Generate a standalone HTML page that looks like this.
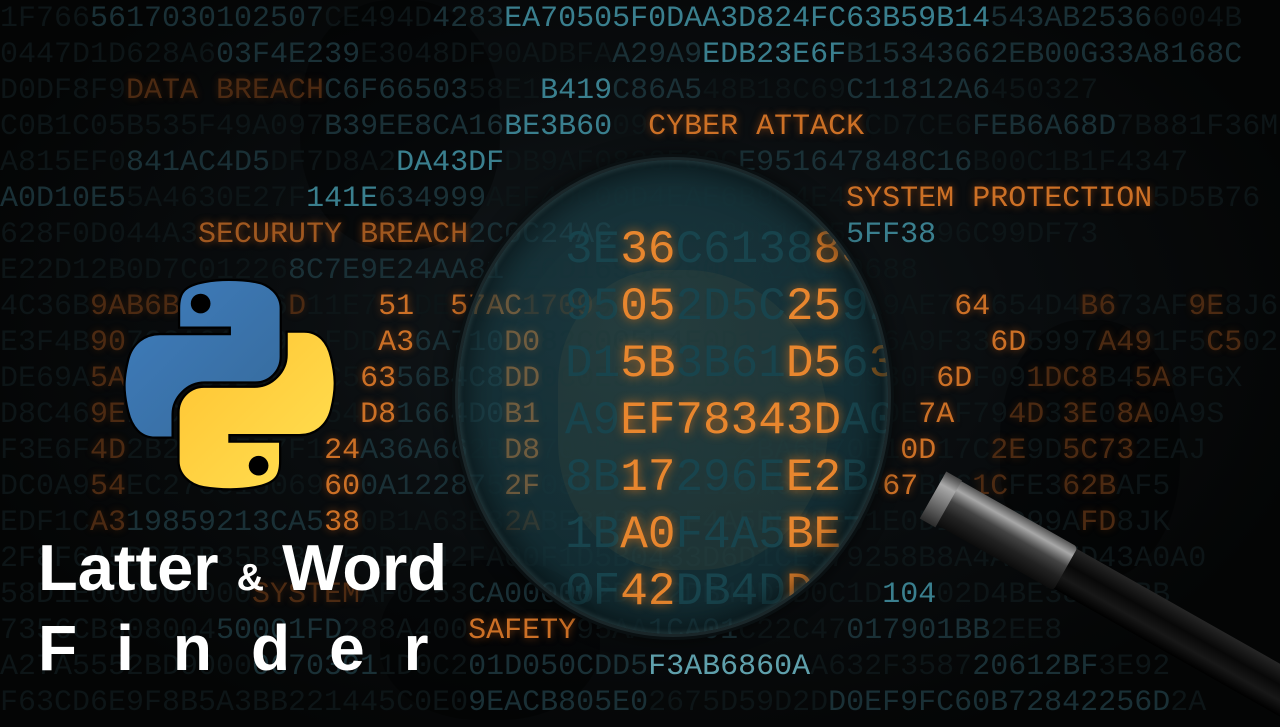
<!DOCTYPE html>
<html><head><meta charset="utf-8"><style>
*{margin:0;padding:0;box-sizing:border-box}
body{width:1280px;height:720px;overflow:hidden;background:#050607;position:relative;font-family:"Liberation Mono",monospace}
.bg{position:absolute;inset:0;background:radial-gradient(ellipse 700px 450px at 640px 330px,#13191c 0%,#090c0e 55%,#040505 100%)}
.map{position:absolute;background:#000;opacity:.35;border-radius:45%}
.r{position:absolute;left:0;font-size:30px;line-height:36px;white-space:pre;color:#0d1517;letter-spacing:0}
.m{color:#1a3036}.b{color:#3a7f8e}.o{color:#cc7026;text-shadow:0 0 8px rgba(220,100,20,.55)}.od{color:#4c2a12;text-shadow:0 0 8px rgba(200,90,20,.25)}
.lens{position:absolute;left:458px;top:160px;width:430px;height:474px;border-radius:50%;overflow:hidden;background:radial-gradient(ellipse at 45% 40%,rgba(35,85,95,.5),rgba(25,68,78,.55) 70%,rgba(18,50,58,.75) 100%);box-shadow:0 0 0 3px #1a2629,0 0 0 6px #0a1012,0 0 18px 6px rgba(0,0,0,.6)}
.lr{position:absolute;left:107px;font-size:46px;line-height:57px;white-space:pre;color:#18444d}
.lo{color:#e8862e;text-shadow:0 0 10px rgba(240,120,20,.8)}
.ld{color:#8a5e26}
.title{position:absolute;color:#fff;font-family:"Liberation Sans",sans-serif;font-weight:bold;white-space:pre}
</style></head><body>
<div class="bg"></div>
<div class="map" style="left:300px;top:0;width:200px;height:250px"></div>
<div class="map" style="left:1000px;top:320px;width:180px;height:260px"></div>
<div class="map" style="left:380px;top:560px;width:220px;height:160px"></div>

<div class="r" style="top:1px">1F766<span class="m">5617030102507</span>CE494D<span class="m">4283</span><span class="b">EA70505F0DAA3D824FC63B59B14</span><span class="m">543AB2536</span>6004B</div>
<div class="r" style="top:37px">0447D1D628A6<span class="m">03F4E239</span>E3048DF90ADBFA<span class="m">A29A9</span><span class="b">EDB23E6F</span><span class="m">B15343662EB00G33A8168C</span></div>
<div class="r" style="top:73px">D0DF8F9<span class="od">DATA BREACH</span><span class="m">C6F66503</span>58E1<span class="b">B419</span><span class="m">C86A5</span>48B18C69<span class="m">C11812A6</span>450327</div>
<div class="r" style="top:109px">C0B1C05B535F49A097<span class="m">B39EE8CA16</span><span class="b">BE3B60</span>09<span class="o">CYBER ATTACK</span>CD7CE6<span class="m">FEB6A68D</span>7B881F36M</div>
<div class="r" style="top:145px">A815EF0<span class="m">841AC4D5</span>DF7D8A2<span class="b">DA43DF</span>DB9AF0833F00C<span class="m">E951647848C16</span>B00C1B1F4347</div>
<div class="r" style="top:181px"><span class="m">A0D10E5</span>5A4630E27F<span class="b">141E</span><span class="m">634999</span>AEF4DC00D4EAE6B9C4E4<span class="o">SYSTEM PROTECTION</span>5D5B76</div>
<div class="r" style="top:217px">628F0D044A3<span class="o" style="color:#a05820">SECURUTY BREACH</span><span class="m">2C0C24AC</span>3E661385D1655<span class="b">5FF38</span>96C99DF73</div>
<div class="r" style="top:253px">E22D12B0D7C01226<span class="m">8C7E9E24AA81</span>3E6D16555280D6A2A5A0688</div>
<div class="r" style="top:289px">4C36B<span class="od">9AB6B</span>D4F7D6<span class="od">D</span>11E7<span class="o">51</span>DE<span class="o">57AC</span><span class="od">1709</span>9C5052D5B2592E0A9AE7<span class="o">64</span>654D4<span class="od">B6</span>73AF<span class="od">9E</span>8J6E</div>
<div class="r" style="top:325px">E3F4B<span class="od">90</span>7C2A61FD9D1FDD<span class="o">A3</span><span class="m">6A710</span><span class="o">D0</span>82C005F4F0D1553B8616A9F33<span class="o">6D</span>5997<span class="od">A49</span>1F5<span class="od">C5</span>021K</div>
<div class="r" style="top:361px">DE69A<span class="od">5A</span>E6B3C9D4F0BC5<span class="o">63</span><span class="m">56B4C8</span><span class="o">DD</span>0C0E5F4D1B3B61D569330F<span class="o">6D</span>F09<span class="od">1DC8</span>B4<span class="od">5A</span>8FGX</div>
<div class="r" style="top:397px">D8C46<span class="od">9E</span>F1C8D3A0B7E54<span class="o">D8</span><span class="m">1664D0</span><span class="o">B1</span>D5E9EF78343DA0A039F0E<span class="o">7A</span>F79<span class="od">4D</span>3<span class="od">3E</span>0<span class="od">8A</span>0A9S</div>
<div class="r" style="top:433px">F3E6F<span class="od">4D</span>2B2A3C5E7F1<span class="o">24</span><span class="m">A36A66</span>2B<span class="o">D8</span>708B17296EE2BA6F70E1<span class="o">0D</span>17C<span class="od">2E</span>9D<span class="od">5C73</span>2EAJ</div>
<div class="r" style="top:469px">DC0A9<span class="od">54</span>EC275815069<span class="o">60</span><span class="m">0A12287</span>5<span class="o">2F</span>08B17296EE2BA6F5A24<span class="o">67</span>B5C<span class="od">1C</span>FE3<span class="od">62B</span>AF5</div>
<div class="r" style="top:505px">EDF1C<span class="od">A3</span><span class="m">19859213CA5</span><span class="o">38</span>0B1A63E3<span class="od">2A</span>BE31B6A0F4A5BE79F01E0D16<span class="o">82</span>D99A<span class="od">FD</span>8JK</div>
<div class="r" style="top:541px">2F8F6A5D975B35B930450D0042FA00F1D5B0433D6D1CE579258B8A4A08FED43A0A0</div>
<div class="r" style="top:577px">58D1E000000000<span class="od">SYSTEM</span>AF0253<span class="m">CA00000</span>2DF42DB4DD1D0C1D<span class="b">104</span>02D4BE3894FBB</div>
<div class="r" style="top:613px">7356CB808004<span class="m">50001FD</span>288A400<span class="o">SAFETY</span>95AA<span class="m">1CA01</span>C22C47<span class="m">017901BB</span>2EE8</div>
<div class="r" style="top:649px">A27A5552BD9000<span class="m">0670301</span>1D0C2<span class="m">01D050CDD5</span><span class="b" style="color:#5fa0ac">F3AB6860A</span>A632F3587<span class="m">20612BF</span>3E92</div>
<div class="r" style="top:685px">F63CD6E9F8B5A3BB221445C0E0<span class="m">9EACB805E0</span>2675D59D2D<span class="m">D0EF9FC60B72842256D</span>2A</div>

<!-- handle -->
<div style="position:absolute;left:935px;top:472px;width:430px;height:46px;transform-origin:0 50%;transform:rotate(29.5deg);border-radius:6px;background:linear-gradient(#262626,#080808 40%,#181818 70%,#000)"></div>
<div style="position:absolute;left:935px;top:470px;width:150px;height:50px;transform-origin:0 50%;transform:rotate(29.5deg);border-radius:4px;background:linear-gradient(#555,#a8a8a8 20%,#444 45%,#222 70%,#0c0c0c)"></div>
<div style="position:absolute;left:933px;top:468px;width:18px;height:54px;transform-origin:0 50%;transform:rotate(29.5deg);background:linear-gradient(#444,#aaa 25%,#2a2a2a)"></div>

<div class="lens">
<div style="position:absolute;left:100px;top:110px;width:270px;height:300px;border-radius:40% 55% 50% 45%;background:rgba(100,100,70,.14)"></div>
<div class="lr" style="top:62px">3E<span class="lo">36</span>C6138<span class="lo">85</span>F</div>
<div class="lr" style="top:119px">95<span class="lo">05</span>2D5C<span class="lo">25</span>92</div>
<div class="lr" style="top:176px">D1<span class="lo">5B</span>3B61<span class="lo">D5</span>6<span class="ld">33</span></div>
<div class="lr" style="top:233px">A9<span class="lo">EF78343D</span>A0<span class="ld">39</span></div>
<div class="lr" style="top:290px">8B<span class="lo">17</span>296E<span class="lo">E2</span>BA<span class="lo">6</span></div>
<div class="lr" style="top:347px">1B<span class="lo">A0</span>F4A5<span class="lo">BE</span>79</div>
<div class="lr" style="top:404px">0F<span class="lo">42</span>DB4D<span class="lo">D1</span>7D</div>
<div style="position:absolute;inset:0;border-radius:50%;box-shadow:inset 0 0 30px 8px rgba(0,0,0,.55),inset 0 0 4px 2px rgba(120,170,175,.35)"></div>
</div>

<!-- python logo -->
<svg style="position:absolute;left:123px;top:278px" width="214" height="214" viewBox="-1 -1 113 113">
<defs>
<linearGradient id="gb" x1="0" y1="0" x2="1" y2="1"><stop offset="0" stop-color="#3f7dbd"/><stop offset="1" stop-color="#366a9b"/></linearGradient>
<linearGradient id="gy" x1="0" y1="0" x2="1" y2="1"><stop offset="0" stop-color="#ffe052"/><stop offset="1" stop-color="#ffc331"/></linearGradient>
</defs>
<path fill="url(#gb)" stroke="#000" stroke-width="1.2" d="M54.9 0C50.3 0 46 .4 42.1 1.1 30.7 3.1 28.6 7.3 28.6 15V25.2H55.4V28.6H18.5C10.7 28.6 3.9 33.3 1.7 42.2-.8 52.5-.9 58.9 1.7 69.6 3.6 77.6 8.2 83.3 16 83.3H25.2V71C25.2 62.1 32.9 54.2 42.1 54.2H68.9C76.4 54.2 82.3 48 82.3 40.6V15C82.3 7.7 76.2 2.3 68.9 1.1 64.3.3 59.5 0 54.9 0Z"/>
<circle cx="40" cy="12.5" r="5.2" fill="#000"/>
<g transform="rotate(180 55.3 55.3)">
<path fill="url(#gy)" stroke="#000" stroke-width="1.2" d="M54.9 0C50.3 0 46 .4 42.1 1.1 30.7 3.1 28.6 7.3 28.6 15V25.2H55.4V28.6H18.5C10.7 28.6 3.9 33.3 1.7 42.2-.8 52.5-.9 58.9 1.7 69.6 3.6 77.6 8.2 83.3 16 83.3H25.2V71C25.2 62.1 32.9 54.2 42.1 54.2H68.9C76.4 54.2 82.3 48 82.3 40.6V15C82.3 7.7 76.2 2.3 68.9 1.1 64.3.3 59.5 0 54.9 0Z"/>
<circle cx="40" cy="12.5" r="5.2" fill="#000"/>
</g>
</svg>

<div class="title" style="left:38px;top:532px;font-size:65px;line-height:72px">Latter <span style="font-size:38px">&amp;</span> Word</div>
<div class="title" style="left:38px;top:612px;font-size:64px;line-height:72px;letter-spacing:39px">Finder</div>
</body></html>
